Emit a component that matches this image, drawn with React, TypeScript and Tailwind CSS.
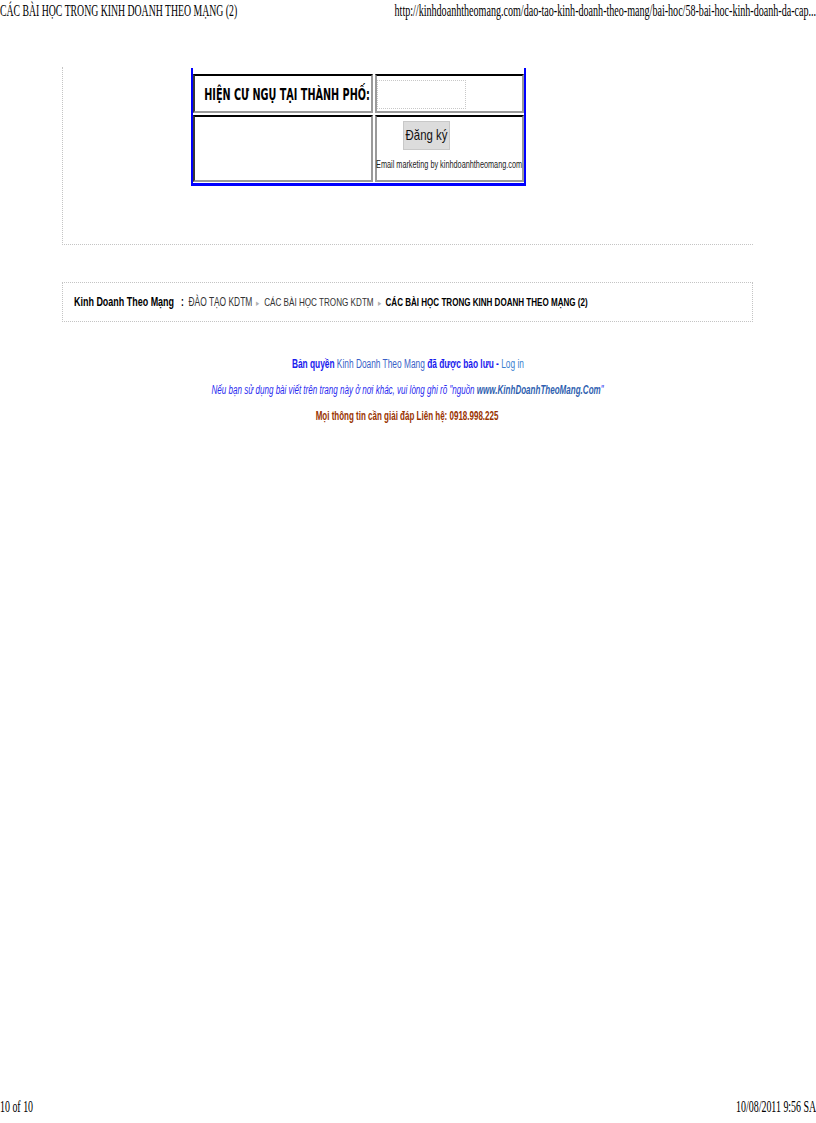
import React from "react";

const serif = { fontFamily: '"Liberation Serif", "Times New Roman", serif' };
const sans = { fontFamily: '"Liberation Sans", Arial, sans-serif' };
const verd = { fontFamily: '"DejaVu Sans", Verdana, sans-serif' };

export default function App() {
  return (
    <div className="flex min-h-[1123px] w-[816px] flex-col overflow-hidden bg-white text-black" style={sans}>
      {/* print header */}
      <div className="flex h-[24px] items-start pt-[1px] text-[16px] leading-[20px]" style={serif}>
        <div className="w-[300px] min-w-0">
          <span className="inline-block origin-left scale-x-[0.61] whitespace-nowrap">
            CÁC BÀI HỌC TRONG KINH DOANH THEO MẠNG (2)
          </span>
        </div>
        <div className="flex min-w-0 flex-1 justify-end">
          <span className="inline-block shrink-0 origin-right scale-x-[0.63] whitespace-nowrap">
            http://kinhdoanhtheomang.com/dao-tao-kinh-doanh-theo-mang/bai-hoc/58-bai-hoc-kinh-doanh-da-cap...
          </span>
        </div>
      </div>

      <div className="ml-[62px] mt-[43px] w-[691px]">
        {/* top block */}
        <div className="border-b border-l border-dotted border-[#c4c4c4] pb-[58px] pl-[128px] pt-[1px]">
          <div className="w-[335px] border-b-[3px] border-l-2 border-r-2 border-[#0000ff] pb-[1px] pt-[6px]">
            <div className="grid grid-cols-[180px_149px] gap-[2px]">
              {/* row 1 */}
              <div className="flex h-[39px] items-center justify-end border-2 border-b-[#9a9a9a] border-l-[#3a3a3a] border-r-[#9a9a9a] border-t-black pr-[1px] pt-[3px]">
                <span
                  className="inline-block shrink-0 origin-right scale-x-[0.645] whitespace-nowrap text-[15px] font-bold"
                  style={verd}
                >
                  HIỆN CƯ NGỤ TẠI THÀNH PHỐ:
                </span>
              </div>
              <div className="flex h-[39px] items-start border-2 border-b-[#9a9a9a] border-l-[#9a9a9a] border-r-[#9a9a9a] border-t-black pt-[4px]">
                <div className="h-[29px] w-[89px] border border-dotted border-[#c8c8c8] bg-white" />
              </div>
              {/* row 2 */}
              <div className="h-[67px] border-2 border-b-[#9a9a9a] border-l-[#3a3a3a] border-r-[#9a9a9a] border-t-black" />
              <div className="flex h-[67px] flex-col border-2 border-b-[#9a9a9a] border-l-[#9a9a9a] border-r-[#9a9a9a] border-t-black">
                <div className="ml-[26px] mt-[4px] flex h-[29px] w-[47px] items-center justify-center border border-[#c8c8c8] bg-[#dcdcdc]">
                  <span className="inline-block scale-x-[0.76] whitespace-nowrap text-[15px] text-[#111]">Đăng ký</span>
                </div>
                <div className="mt-[9px] flex justify-center">
                  <span className="inline-block shrink-0 scale-x-[0.73] whitespace-nowrap text-[10px] leading-[12px] text-[#222]">
                    Email marketing by kinhdoanhtheomang.com
                  </span>
                </div>
              </div>
            </div>
          </div>
        </div>

        {/* breadcrumb */}
        <div className="mt-[37px] flex h-[40px] items-center border border-dotted border-[#c4c4c4] pl-[11px]">
          <span className="inline-block origin-left scale-x-[0.70] whitespace-nowrap text-[12px] leading-[14px]">
            <b className="text-[12.8px] text-black">Kinh Doanh Theo Mạng</b>
            <b className="text-black">&nbsp;&nbsp; : &nbsp;</b>
            <span className="text-[#333]">ĐÀO TẠO KDTM</span>
            <span className="mx-[6px] text-[9px] text-[#b0b0b0]">▸</span>
            <span className="text-[11.6px] text-[#333]">CÁC BÀI HỌC TRONG KDTM</span>
            <span className="mx-[6px] text-[9px] text-[#b0b0b0]">▸</span>
            <b className="text-[11.5px] text-black">CÁC BÀI HỌC TRONG KINH DOANH THEO MẠNG (2)</b>
          </span>
        </div>

        {/* site footer */}
        <div className="mt-[29px] flex flex-col items-center text-[12px] leading-[26px]">
          <span className="inline-block shrink-0 scale-x-[0.695] whitespace-nowrap">
            <b className="text-[#1a1aee]">Bản quyền </b>
            <span className="text-[#3a5fc8]">Kinh Doanh Theo Mang</span>
            <b className="text-[#1a1aee]"> đã được bảo lưu - </b>
            <span className="text-[#3a7fd0]">Log in</span>
          </span>
          <span className="inline-block shrink-0 scale-x-[0.67] whitespace-nowrap italic text-[#2a2af0]">
            Nếu bạn sử dụng bài viết trên trang này ở nơi khác, vui lòng ghi rõ "nguồn{" "}
            <b className="text-[#2f5fb0]">www.KinhDoanhTheoMang.Com</b>"
          </span>
          <span className="inline-block shrink-0 scale-x-[0.667] whitespace-nowrap font-bold text-[#993300]">
            Mọi thông tin cần giải đáp Liên hệ: 0918.998.225
          </span>
        </div>
      </div>

      {/* print footer */}
      <div className="mt-auto flex h-[26px] items-start text-[16px] leading-[20px]" style={serif}>
        <div className="w-[200px] min-w-0">
          <span className="inline-block origin-left scale-x-[0.62] whitespace-nowrap">10 of 10</span>
        </div>
        <div className="flex min-w-0 flex-1 justify-end">
          <span className="inline-block shrink-0 origin-right scale-x-[0.62] whitespace-nowrap">10/08/2011 9:56 SA</span>
        </div>
      </div>
    </div>
  );
}
